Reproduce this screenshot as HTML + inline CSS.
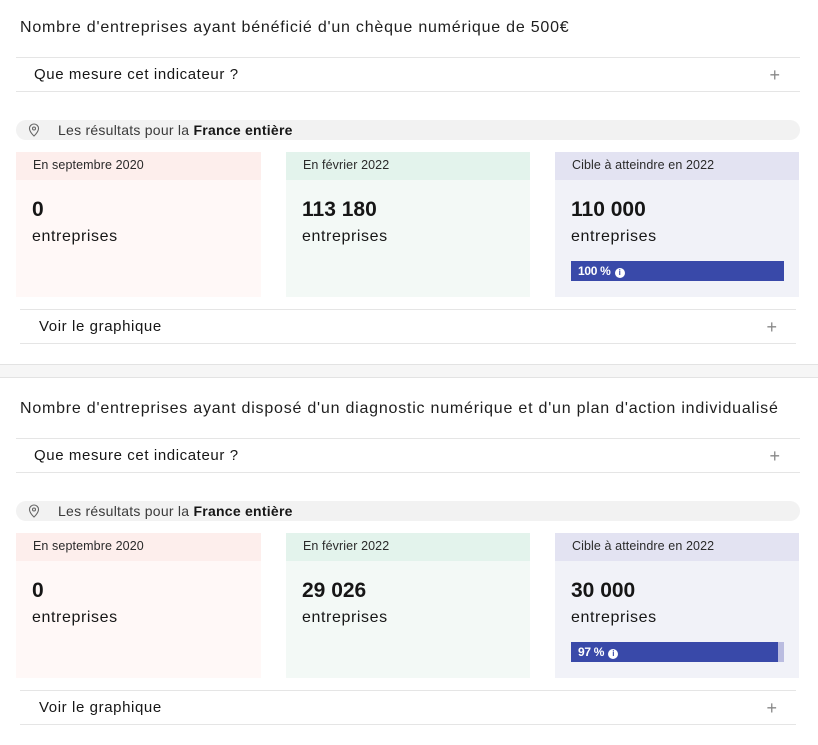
<!DOCTYPE html>
<html><head><meta charset="utf-8"><style>
*{margin:0;padding:0;box-sizing:border-box}
body{width:818px;height:742px;background:#fff;font-family:"Liberation Sans",sans-serif;color:#161616;position:relative;overflow:hidden}
.s{position:absolute;left:0;width:818px;height:364px}
.a{position:absolute}
.t{left:20px;top:19px;font-size:16px;letter-spacing:0.78px;white-space:nowrap;color:#1e1e1e}
.acc{left:16px;width:784px;top:57px;height:35px;border-top:1px solid #e5e5e5;border-bottom:1px solid #e5e5e5}
.acc span{position:absolute;left:18px;top:8px;font-size:15px;color:#161616;letter-spacing:0.6px}
.plus{position:absolute;right:20px;top:7px;font-size:18px;color:#888;font-weight:300}
.loc{left:16px;width:784px;top:120px;height:20px;background:#f2f2f2;border-radius:10px;font-size:14px;color:#3a3a3a;letter-spacing:0.25px}
.loc span{position:absolute;left:42px;top:2px}
.loc svg{position:absolute;left:12px;top:3px}
.c{top:152px;height:145px}
.c .h{height:28px;font-size:12.5px;padding:6px 0 0 17px;color:#2a2a2a;letter-spacing:0.1px}
.c .n{position:absolute;left:16px;top:46px;font-size:21px;font-weight:bold;letter-spacing:0px}
.c .u{position:absolute;left:16px;top:76px;font-size:16px;letter-spacing:0.6px}
.bar{position:absolute;left:16px;top:109px;width:213px;height:20px;background:#babce0}
.bar div{height:20px;background:#3949a9;color:#fff;font-size:12px;font-weight:bold;padding:3px 0 0 7px;letter-spacing:-0.3px}
.bar i{display:inline-block;width:10px;height:10px;border-radius:50%;background:#fff;color:#3949a9;font-style:normal;font-size:8px;text-align:center;line-height:10px;margin-left:4px;vertical-align:0px}
.g{left:20px;width:776px;top:309px;height:35px;border-top:1px solid #e5e5e5;border-bottom:1px solid #e5e5e5}
.g span{position:absolute;left:19px;top:8px;font-size:15px;letter-spacing:0.6px}
.sep{position:absolute;left:0;top:364px;width:818px;height:14px;background:#f6f6f6;border-top:1px solid #e3e3e3;border-bottom:1px solid #e3e3e3}
</style></head><body>

<div class="s" style="top:0">
<div class="a t">Nombre d'entreprises ayant bénéficié d'un chèque numérique de 500€</div>
<div class="a acc"><span>Que mesure cet indicateur ?</span><b class="plus">+</b></div>
<div class="a loc"><svg width="12" height="14" viewBox="0 0 12 14"><path d="M6 1a4.5 4.5 0 0 0-4.5 4.5C1.5 9 6 13 6 13s4.5-4 4.5-7.5A4.5 4.5 0 0 0 6 1z" fill="none" stroke="#666" stroke-width="1.1"/><circle cx="6" cy="5.5" r="1.5" fill="none" stroke="#666" stroke-width="1.1"/></svg><span>Les résultats pour la <b style="color:#161616">France entière</b></span></div>
<div class="a c" style="left:16px;width:245px;background:#fff8f7"><div class="h" style="background:#fdeeec">En septembre 2020</div><div class="n">0</div><div class="u">entreprises</div></div>
<div class="a c" style="left:286px;width:244px;background:#f3f9f6"><div class="h" style="background:#e3f3ec">En février 2022</div><div class="n">113 180</div><div class="u">entreprises</div></div>
<div class="a c" style="left:555px;width:244px;background:#f1f2f8"><div class="h" style="background:#e3e3f2">Cible à atteindre en 2022</div><div class="n">110 000</div><div class="u">entreprises</div><div class="bar"><div style="width:100%">100 %<i>i</i></div></div></div>
<div class="a g"><span>Voir le graphique</span><b class="plus" style="right:19px">+</b></div>
</div>

<div class="sep"></div>

<div class="s" style="top:381px">
<div class="a t">Nombre d'entreprises ayant disposé d'un diagnostic numérique et d'un plan d'action individualisé</div>
<div class="a acc"><span>Que mesure cet indicateur ?</span><b class="plus">+</b></div>
<div class="a loc"><svg width="12" height="14" viewBox="0 0 12 14"><path d="M6 1a4.5 4.5 0 0 0-4.5 4.5C1.5 9 6 13 6 13s4.5-4 4.5-7.5A4.5 4.5 0 0 0 6 1z" fill="none" stroke="#666" stroke-width="1.1"/><circle cx="6" cy="5.5" r="1.5" fill="none" stroke="#666" stroke-width="1.1"/></svg><span>Les résultats pour la <b style="color:#161616">France entière</b></span></div>
<div class="a c" style="left:16px;width:245px;background:#fff8f7"><div class="h" style="background:#fdeeec">En septembre 2020</div><div class="n">0</div><div class="u">entreprises</div></div>
<div class="a c" style="left:286px;width:244px;background:#f3f9f6"><div class="h" style="background:#e3f3ec">En février 2022</div><div class="n">29 026</div><div class="u">entreprises</div></div>
<div class="a c" style="left:555px;width:244px;background:#f1f2f8"><div class="h" style="background:#e3e3f2">Cible à atteindre en 2022</div><div class="n">30 000</div><div class="u">entreprises</div><div class="bar"><div style="width:97%">97 %<i>i</i></div></div></div>
<div class="a g"><span>Voir le graphique</span><b class="plus" style="right:19px">+</b></div>
</div>

</body></html>
